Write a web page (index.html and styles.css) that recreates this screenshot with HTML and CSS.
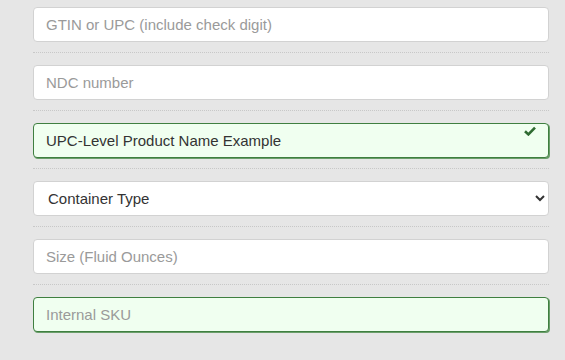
FILE: index.html
```html
<!DOCTYPE html>
<html>
<head>
  <meta charset="utf-8">
  <meta name="viewport" content="width=device-width">
  <title>Product Form</title>
  <link rel="stylesheet" href="styles.css">
</head>
<body>
  <form class="container">
    <div class="row">
      <input class="field" type="text" placeholder="GTIN or UPC (include check digit)">
    </div>
    <div class="row">
      <input class="field" type="text" placeholder="NDC number">
    </div>
    <div class="row">
      <div class="feedback">
        <input class="field valid" type="text" value="UPC-Level Product Name Example">
        <svg class="check" width="12" height="10" viewBox="0 0 12 10">
          <path d="M1 5.2 L4.4 8.4 L11 1.6" fill="none" stroke="#2f6b31" stroke-width="2.6"/>
        </svg>
      </div>
    </div>
    <div class="row">
      <div class="select-wrap">
        <select class="field select">
          <option>Container Type</option>
        </select>
        <svg class="chevron" width="10" height="7" viewBox="0 0 10 7">
          <path d="M1 1 L5 5 L9 1" fill="none" stroke="#333" stroke-width="2"/>
        </svg>
      </div>
    </div>
    <div class="row">
      <input class="field" type="text" placeholder="Size (Fluid Ounces)">
    </div>
    <div class="row last">
      <input class="field valid" type="text" placeholder="Internal SKU">
    </div>
  </form>
</body>
</html>
```

FILE: styles.css
```css
html, body {
  margin: 0;
  padding: 0;
}

body {
  background-color: #e6e6e6;
  font-family: "Liberation Sans", Arial, sans-serif;
  font-size: 15px;
  color: #333;
}

.container {
  margin: 0;
  padding: 7px 16px 0 33px;
}

.row {
  padding-bottom: 10px;
  margin-bottom: 12px;
  border-bottom: 1px dotted #c8c8c8;
}

.row.last {
  border-bottom: none;
}

.field {
  display: block;
  box-sizing: border-box;
  width: 100%;
  height: 35px;
  margin: 0;
  padding: 0 12px;
  border: 1px solid #d2d2d2;
  border-radius: 4px;
  background-color: #fff;
  font-family: inherit;
  font-size: 15px;
  color: #333;
  outline: none;
}

.field::placeholder {
  color: #9a9a9a;
}

.valid {
  border-color: #3f7f40;
  background-color: #f0fff0;
  box-shadow: 1px 1px 0 #6a9e6a;
}

.feedback, .select-wrap {
  position: relative;
}

.check {
  position: absolute;
  top: 3px;
  right: 13px;
}

.select {
  appearance: none;
  -webkit-appearance: none;
  padding-left: 14px;
}

.chevron {
  position: absolute;
  top: 14px;
  right: 4px;
  pointer-events: none;
}
```
